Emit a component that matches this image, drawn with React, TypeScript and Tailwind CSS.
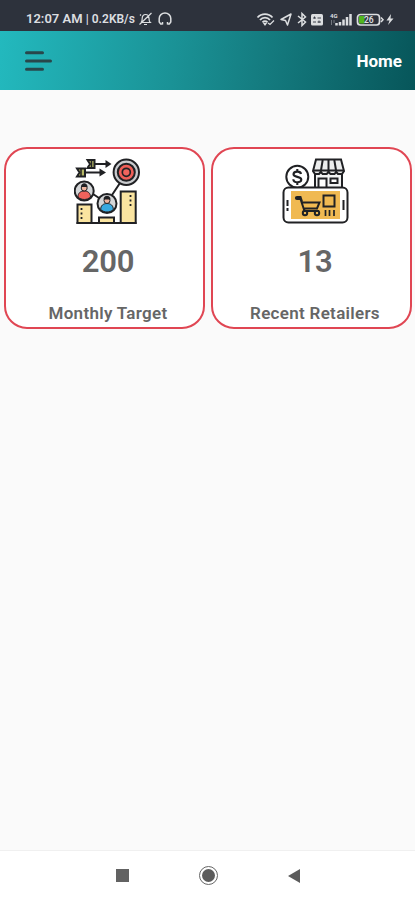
import type { ReactNode } from "react"

function StatusBar() {
  return (
    <div className="flex h-[31px] items-end justify-between bg-[#2d323c] pr-[20px] pb-[4px] pl-[26px] text-[#dcdee0]">
      <div className="flex h-[16px] items-center">
        <span className="w-[111px] text-[13px] leading-4 font-semibold whitespace-nowrap">
          12:07 AM <span className="text-[12px]">| 0.2KB/s</span>
        </span>
        <svg className="ml-[1px]" width="15" height="14" viewBox="0 0 15 14" fill="none" stroke="currentColor" strokeWidth="1.2">
          <path d="M3 10.5c1-1 1.2-2.5 1.2-4C4.2 4 5.5 2.5 7.500 2.500S11 4 11 6.500c0 1.500.3 3 1.300 4H3M6 12.500h3M1.500 12.500l12-11.500M2 3.500l1-1" />
        </svg>
        <svg className="ml-[5px]" width="14" height="14" viewBox="0 0 14 14" fill="none" stroke="currentColor" strokeWidth="1.500">
          <path d="M4.500 12H2.700L1.200 10V6.500a5.800 5.500 0 0 1 11.600 0V10l-1.500 2H9.500M4.500 12.500V10M9.500 12.500V10" />
        </svg>
      </div>

      <svg width="139" height="16" viewBox="0 0 139 16" fill="none" stroke="currentColor">
        {/* Wifi */}
        <g strokeWidth="1.800">
          <path d="M1.500 6.500a10 10 0 0 1 15 0M4 9a6.500 6.500 0 0 1 10 0M6.500 11.300a3.500 3.500 0 0 1 5 0" />
          <path d="M8 12.500h2L9 14zM12 12l2 1.500 4-4" strokeWidth="1.200" />
        </g>
        {/* Location */}
        <path d="M25 8.500L35 3l-3.500 11-2-4.500z" strokeWidth="1.500" strokeLinejoin="round" />
        {/* Bluetooth */}
        <path d="M42 5l7.500 6-3.500 3.500v-12l3.500 3.500-7.500 6" strokeWidth="1.500" />
        {/* VoLTE */}
        <rect x="55" y="3" width="12" height="11.500" rx="1.500" fill="currentColor" stroke="none" />
        <path d="M57 7h3M61.500 7h3.500M57 11h3M61.500 11H65M58.500 5.500v2M63 9.500V12" stroke="#2d323c" strokeWidth="0.900" />
        {/* Signal */}
        <text x="74" y="7" fontSize="6" fontWeight="700" fill="currentColor" stroke="none">4G</text>
        <path d="M80.500 14.500v-2.500M84 14.500V11M87.500 14.500V8.500M91 14.500V6M94.500 14.500V3" strokeWidth="2.500" />
        <path d="M75.500 9v5M78 9v3" strokeWidth="1" opacity="0.400" />
        {/* Battery */}
        <rect x="101.500" y="3.500" width="22" height="10.500" rx="3" strokeWidth="1.700" />
        <rect x="103" y="5" width="5.500" height="7.500" fill="#51b51d" stroke="none" />
        <path d="M125 6.500l2 2.200-2 2.200" strokeWidth="1.500" />
        <text x="108" y="11.700" fontSize="8.500" fontWeight="600" fill="currentColor" stroke="none">26</text>
        <path d="M135 3l-4.500 6.500h3L132 14l5.500-6.500h-3z" fill="currentColor" stroke="none" />
      </svg>
    </div>
  )
}

function Header() {
  return (
    <header className="flex h-[59px] items-center justify-between bg-[linear-gradient(97deg,#23b9be_0%,#1a9296_42%,#147a7e_65%,#07565a_100%)] pr-[13px] pl-[25px]">
      <svg width="28" height="22" viewBox="0 0 28 22" fill="none" stroke="#28474b" strokeWidth="3" strokeLinecap="round">
        <path d="M1.500 2.700h16M1.500 11h24M1.500 19.300h16" />
      </svg>
      <h1 className="pt-[1px] text-[17px] leading-6 font-bold text-white">Home</h1>
    </header>
  )
}

function TargetIcon() {
  return (
    <svg width="68" height="68" viewBox="0 0 68 68" fill="none" stroke="#202124" strokeWidth="2">
      {/* Arrows */}
      <path d="M20 7h13M11 15.500h15" />
      <path d="M31.500 3l6 4-6 4zM25.500 11.500l6.500 4-6.500 4z" fill="#202124" stroke="none" />
      <path d="M13.500 3h7v8h-7l2.500-4zM3 11.500h8v8H3l2.500-4z" fill="#b5b765" />
      <path d="M17.500 3v8M7 11.500v8" strokeWidth="1.500" />
      {/* Links */}
      <path d="M38 38l8-12M19 37l6 4" />
      {/* Target */}
      <circle cx="52.300" cy="15.300" r="12.700" fill="#c9cbce" />
      <circle cx="52.300" cy="15.300" r="8.500" fill="#ef5f58" />
      <circle cx="52.300" cy="15.300" r="4" fill="#f0645d" strokeWidth="1.700" />
      {/* Bars */}
      <path d="M3.500 47.500h14V66h-14zM46.700 34.500h15V66h-15zM25 60.500h15V66H25z" fill="#fae4a0" />
      <path d="M2.500 66h60" />
      <path d="M7.500 51v12M56.500 38v11" strokeDasharray="2 2.500" strokeWidth="1.800" />
      {/* People */}
      <circle cx="10.200" cy="34" r="9.500" fill="#d4d6d8" />
      <path d="M4 40c0-4 2.500-6 6.200-6s6.300 2 6.300 6c-3.500 3.300-9 3.300-12.500 0z" fill="#ef625c" strokeWidth="1" />
      <circle cx="10.200" cy="31" r="3" fill="#efb49e" strokeWidth="1" />
      <path d="M7 30c0-5 6.500-5 6.500 0z" fill="#202124" stroke="none" />
      <circle cx="33" cy="46.500" r="9.500" fill="#d4d6d8" />
      <path d="M26.700 52.500c0-4 2.500-6 6.300-6s6.300 2 6.300 6c-3.500 3.300-9.100 3.300-12.600 0z" fill="#38a9df" strokeWidth="1" />
      <circle cx="33" cy="43.500" r="3" fill="#efb49e" strokeWidth="1" />
      <path d="M29.500 42.500c0-5 7-5 7 0z" fill="#202124" stroke="none" />
    </svg>
  )
}

function RetailerIcon() {
  return (
    <svg width="68" height="68" viewBox="0 0 68 68" fill="none" stroke="#202124" strokeWidth="2">
      {/* Store */}
      <path d="M34 15v16h27V15" fill="#f3f4f4" />
      <path d="M35 2.500h25l3 11.500-2 3h-4l-1.700-2-1.800 2h-4l-2-2-1.800 2h-4l-2-2-1.700 2h-4l-2-3z" fill="#eceded" />
      <path d="M32 13.500h31M39.700 15l2-12M47.500 15V3M55.300 15l-2-12" />
      <path d="M37.500 30v-8.500h8V30M49.500 21.500h7v4.500h-7z" fill="#fff" />
      {/* Coin */}
      <circle cx="16.300" cy="19.700" r="11" fill="#fff" />
      <path d="M20 17c-.5-3.500-7.500-3-7.500.2 0 3.500 7.800 1.800 7.800 5.500 0 3.500-7.800 3.500-8-.5M16.300 12v3M16.300 25v3" strokeWidth="2.100" />
      {/* Phone */}
      <rect x="2.500" y="30.500" width="64" height="35" rx="5" fill="#fff" />
      <rect x="10" y="34" width="49" height="28" fill="#f0b952" stroke="none" />
      <path d="M6.500 43v6M6.500 51v3M62.500 43v10" />
      {/* Cart */}
      <path d="M21 44.500L19.500 40h-3.500c-1.500 0-1.500 2 0 2h3.500l4 12h14.500M21 45.500h17.500L36 51.500H23.500" />
      <circle cx="24" cy="56" r="2.200" />
      <circle cx="36" cy="56" r="2.200" />
      {/* Parcel and barcode */}
      <rect x="42.500" y="38.500" width="11" height="11" />
      <path d="M44.500 53v6M48.500 53v6M53 53v6" strokeWidth="1.700" />
    </svg>
  )
}

function StatCard({ icon, value, label }: { icon: ReactNode; value: string; label: string }) {
  return (
    <section className="flex h-[182px] w-[201px] flex-col items-center rounded-[23px] border-2 border-[#e04653] bg-white pt-[8px] pl-[7px] text-[#666]">
      {icon}
      <p className="mt-[19px] text-[31px] leading-9 font-semibold tracking-[-0.2px]">{value}</p>
      <p className="mt-[21px] text-[17px] leading-6 font-semibold tracking-[0.3px] whitespace-nowrap">{label}</p>
    </section>
  )
}

function NavigationBar() {
  return (
    <nav className="flex h-[50px] items-center justify-center gap-[70px] border-t border-[#f0f0f0] bg-white">
      <div className="size-[13px] bg-[#626262]" />
      <div className="flex size-[19px] items-center justify-center rounded-full border border-[#666]">
        <div className="size-[13px] rounded-full bg-[#5c5c5c]" />
      </div>
      <svg width="12" height="14" viewBox="0 0 12 14" fill="#5c5c5c">
        <path d="M12 0v14L0 7z" />
      </svg>
    </nav>
  )
}

export default function App() {
  return (
    <div className="flex h-[900px] w-[415px] flex-col overflow-hidden bg-[#fafafa] font-['Roboto',sans-serif]">
      <StatusBar />
      <Header />
      <main className="flex flex-1 items-start gap-[6px] pt-[57px] pl-[4px]">
        <StatCard icon={<TargetIcon />} value="200" label="Monthly Target" />
        <StatCard icon={<RetailerIcon />} value="13" label="Recent Retailers" />
      </main>
      <NavigationBar />
    </div>
  )
}
